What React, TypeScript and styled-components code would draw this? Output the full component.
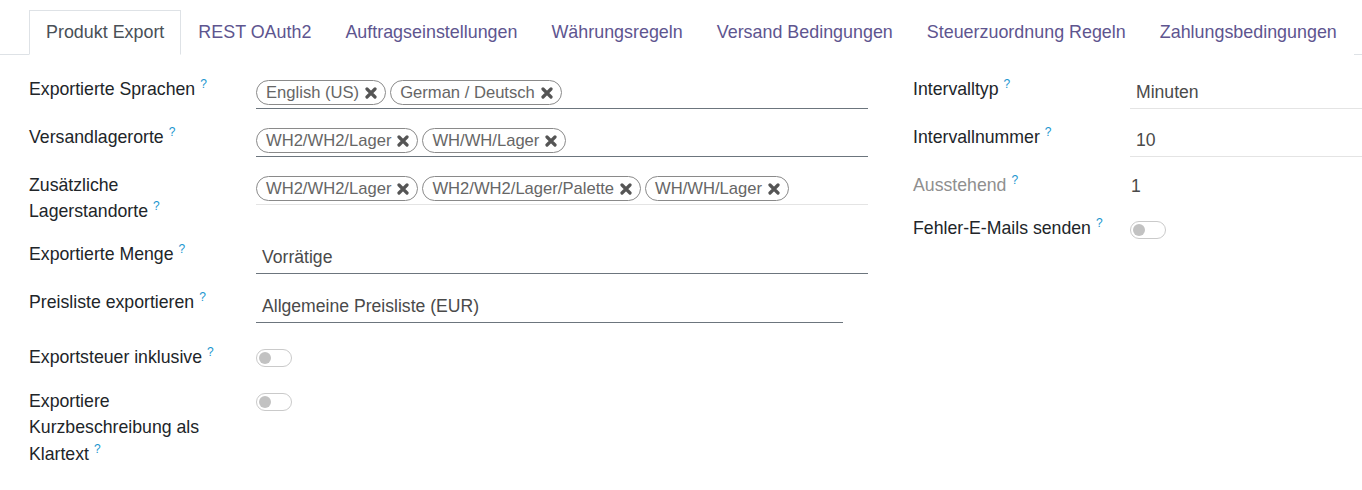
import React from "react";
import styled, { createGlobalStyle } from "styled-components";

const GlobalStyle = createGlobalStyle`
  html, body {
    margin: 0;
    padding: 0;
    background: #ffffff;
  }
  body {
    font-family: "Liberation Sans", Arial, sans-serif;
    font-size: 17.5px;
    color: #212529;
  }
`;

const Page = styled.div`
  width: 1362px;
  height: 490px;
  overflow: hidden;
  background: #ffffff;
`;

const TabBar = styled.ul`
  display: flex;
  list-style: none;
  margin: 10px 0 0;
  padding: 0 0 0 29px;
  border-bottom: 1px solid #dee2e6;
`;

const Tab = styled.li<{ $active?: boolean }>`
  box-sizing: border-box;
  height: 45px;
  margin-bottom: -1px;
  padding: 0 16px;
  display: flex;
  align-items: center;
  border: 1px solid transparent;
  font-size: 17.9px;
  white-space: nowrap;
  color: ${(p) => (p.$active ? "#495057" : "#5e558f")};
  background: #ffffff;
  ${(p) => p.$active && "border-color: #dee2e6 #dee2e6 #ffffff;"}
`;

const Sheet = styled.div`
  display: grid;
  grid-template-columns: 839px 1fr;
  column-gap: 45px;
  margin-top: 21px;
  padding-left: 29px;
`;

const Group = styled.div`
  display: flex;
  flex-direction: column;
`;

const Row = styled.div<{ $labelWidth: number; $height?: number; $toggleTop?: number }>`
  display: grid;
  grid-template-columns: ${(p) => p.$labelWidth}px 1fr;
  align-items: start;
  ${(p) => (p.$height ? `height: ${p.$height}px;` : "")}
`;

const Label = styled.div<{ $muted?: boolean }>`
  max-width: 200px;
  line-height: 26.25px;
  font-size: 17.7px;
  color: ${(p) => (p.$muted ? "#8f8f8f" : "#212529")};
`;

const Help = styled.span`
  position: relative;
  top: -7px;
  font-size: 12px;
  line-height: 12px;
  margin-left: 5px;
  color: #2196cf;
`;

const TagField = styled.div<{ $strong?: boolean }>`
  display: flex;
  flex-wrap: wrap;
  gap: 4px;
  padding: 4px 0 3px;
  border-bottom: 1px solid ${(p) => (p.$strong ? "#6c757d" : "#e4e4e4")};
`;

const Tag = styled.span`
  box-sizing: border-box;
  height: 25px;
  display: inline-flex;
  align-items: center;
  gap: 6px;
  padding: 0 8px 0 9px;
  border: 1px solid #8a8a8a;
  border-radius: 13px;
  font-size: 16.6px;
  color: #666666;
  white-space: nowrap;
`;

const RemoveIcon = () => (
  <svg width="12" height="12" viewBox="0 0 12 12" aria-hidden="true">
    <path
      d="M2 2 L10 10 M10 2 L2 10"
      stroke="#555555"
      strokeWidth="3.2"
      strokeLinecap="round"
      fill="none"
    />
  </svg>
);

const TextValue = styled.div<{ $line?: "strong" | "light" | "none"; $width?: number; $pad?: number }>`
  ${(p) => (p.$width ? `width: ${p.$width}px;` : "")}
  padding: ${(p) => (p.$pad ?? 3)}px 0 3px ${(p) => (p.$line === "none" ? 1 : 6)}px;
  line-height: 26.25px;
  font-size: 17.6px;
  color: #4a4a4a;
  border-bottom: ${(p) =>
    p.$line === "strong"
      ? "1px solid #6c757d"
      : p.$line === "none"
      ? "none"
      : "1px solid #e4e4e4"};
`;

const ToggleTrack = styled.span<{ $top?: number }>`
  box-sizing: border-box;
  margin-top: ${(p) => p.$top ?? 5}px;
  width: 36px;
  height: 18px;
  border: 1px solid #cacaca;
  border-radius: 9px;
  display: flex;
  align-items: center;
  padding-left: 2px;
`;

const ToggleKnob = styled.span`
  width: 12px;
  height: 12px;
  border-radius: 50%;
  background: #c2c2c2;
`;

const Toggle: React.FC<{ top?: number }> = ({ top }) => (
  <ToggleTrack $top={top}>
    <ToggleKnob />
  </ToggleTrack>
);

const FieldLabel: React.FC<{ children: React.ReactNode; muted?: boolean }> = ({
  children,
  muted,
}) => (
  <Label $muted={muted}>
    {children}
    <Help>?</Help>
  </Label>
);

const Tags: React.FC<{ items: string[]; strong?: boolean }> = ({ items, strong }) => (
  <TagField $strong={strong}>
    {items.map((t) => (
      <Tag key={t}>
        {t}
        <RemoveIcon />
      </Tag>
    ))}
  </TagField>
);

const tabs = [
  "Produkt Export",
  "REST OAuth2",
  "Auftragseinstellungen",
  "Währungsregeln",
  "Versand Bedingungen",
  "Steuerzuordnung Regeln",
  "Zahlungsbedingungen",
];

export default function App() {
  return (
    <Page>
      <GlobalStyle />
      <TabBar>
        {tabs.map((t, i) => (
          <Tab key={t} $active={i === 0}>
            {t}
          </Tab>
        ))}
      </TabBar>
      <Sheet>
        <Group>
          <Row $labelWidth={227} $height={48}>
            <FieldLabel>Exportierte Sprachen</FieldLabel>
            <Tags strong items={["English (US)", "German / Deutsch"]} />
          </Row>
          <Row $labelWidth={227} $height={48}>
            <FieldLabel>Versandlagerorte</FieldLabel>
            <Tags strong items={["WH2/WH2/Lager", "WH/WH/Lager"]} />
          </Row>
          <Row $labelWidth={227} $height={69}>
            <FieldLabel>Zusätzliche Lagerstandorte</FieldLabel>
            <Tags items={["WH2/WH2/Lager", "WH2/WH2/Lager/Palette", "WH/WH/Lager"]} />
          </Row>
          <Row $labelWidth={227} $height={48}>
            <FieldLabel>Exportierte Menge</FieldLabel>
            <TextValue $line="strong">Vorrätige</TextValue>
          </Row>
          <Row $labelWidth={227} $height={55}>
            <FieldLabel>Preisliste exportieren</FieldLabel>
            <TextValue $line="strong" $width={581} $pad={4}>
              Allgemeine Preisliste (EUR)
            </TextValue>
          </Row>
          <Row $labelWidth={227} $height={44}>
            <FieldLabel>Exportsteuer inklusive</FieldLabel>
            <Toggle />
          </Row>
          <Row $labelWidth={227}>
            <FieldLabel>Exportiere Kurzbeschreibung als Klartext</FieldLabel>
            <Toggle />
          </Row>
        </Group>
        <Group>
          <Row $labelWidth={217} $height={48}>
            <FieldLabel>Intervalltyp</FieldLabel>
            <TextValue $line="light">Minuten</TextValue>
          </Row>
          <Row $labelWidth={217} $height={48}>
            <FieldLabel>Intervallnummer</FieldLabel>
            <TextValue $line="light">10</TextValue>
          </Row>
          <Row $labelWidth={217} $height={43}>
            <FieldLabel muted>Ausstehend</FieldLabel>
            <TextValue $line="none" $pad={1}>
              1
            </TextValue>
          </Row>
          <Row $labelWidth={217}>
            <FieldLabel>Fehler-E-Mails senden</FieldLabel>
            <Toggle top={6} />
          </Row>
        </Group>
      </Sheet>
    </Page>
  );
}
